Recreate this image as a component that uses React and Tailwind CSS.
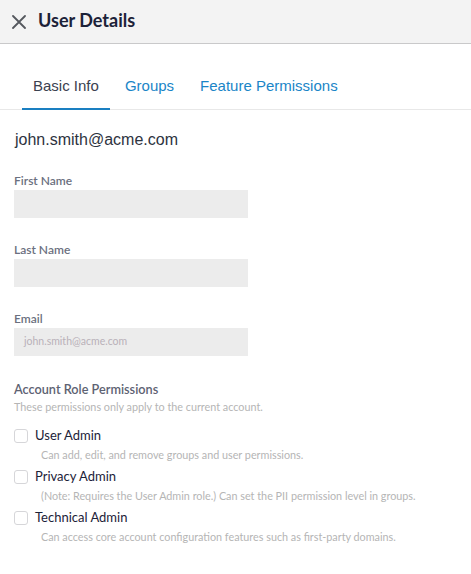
import React from "react";

const roles = [
  {
    name: "User Admin",
    desc: "Can add, edit, and remove groups and user permissions.",
  },
  {
    name: "Privacy Admin",
    desc: "(Note: Requires the User Admin role.) Can set the PII permission level in groups.",
  },
  {
    name: "Technical Admin",
    desc: "Can access core account configuration features such as first-party domains.",
  },
];

const Field = ({ label, placeholder }) => (
  <div className="flex flex-col">
    <label className="text-[12px] font-semibold text-[#6b7080] leading-[16px] mb-px">
      {label}
    </label>
    <div className="w-[234px] h-[28px] bg-[#ececec] flex items-center px-[10px]">
      {placeholder ? (
        <span className="text-[10.5px] text-[#b9b1b9]">{placeholder}</span>
      ) : null}
    </div>
  </div>
);

export default function App() {
  return (
    <div className="w-[471px] h-[574px] bg-white font-['Lato',sans-serif]">
      {/* Header */}
      <div className="h-[44px] bg-[#f3f3f3] border-b border-[#c9c9ca] flex items-center px-[12px]">
        <svg width="14" height="14" viewBox="0 0 14 14" className="mr-[12px]">
          <path d="M1 1L13 13M13 1L1 13" stroke="#55585e" strokeWidth="1.8" strokeLinecap="round" />
        </svg>
        <h1 className="text-[18px] font-bold text-[#1c2238] -mt-[2px]">User Details</h1>
      </div>

      {/* Tabs */}
      <div className="flex border-b border-[#e8e8e8] px-[22px] pt-[31px] font-['Liberation_Sans',sans-serif] text-[15px]">
        <div className="px-[11px] pb-[10px] text-[#3b4150] border-b-2 border-[#1a7fc1] -mb-px">
          Basic Info
        </div>
        <div className="px-[15px] pb-[10px] text-[#1a85c7]">Groups</div>
        <div className="px-[11px] pb-[10px] text-[#1a85c7]">Feature Permissions</div>
      </div>

      {/* Body */}
      <div className="px-[14px]">
        <div className="mt-[20px] ml-px font-['Liberation_Sans',sans-serif] text-[16px] text-[#2d3340] leading-[20px]">
          john.smith@acme.com
        </div>

        <div className="mt-[23px] flex flex-col gap-[24px]">
          <Field label="First Name" />
          <Field label="Last Name" />
          <Field label="Email" placeholder="john.smith@acme.com" />
        </div>

        <div className="mt-[25px]">
          <div className="text-[12.7px] font-semibold text-[#5d6272] leading-[16px]">
            Account Role Permissions
          </div>
          <div className="text-[10.8px] text-[#b5b5b5] leading-[14px] mt-[3px]">
            These permissions only apply to the current account.
          </div>
          <div className="mt-[14px] flex flex-col">
            {roles.map((r) => (
              <div key={r.name} className="h-[41px]">
                <div className="flex items-center h-[16px]">
                  <span className="w-[14px] h-[14px] rounded-[3px] border border-[#d6d6d9] bg-white" />
                  <span className="ml-[7px] text-[13px] text-[#1c2238]">{r.name}</span>
                </div>
                <div className="ml-[27px] mt-[4px] text-[10.8px] text-[#b5b5b5] leading-[14px]">
                  {r.desc}
                </div>
              </div>
            ))}
          </div>
        </div>
      </div>
    </div>
  );
}
